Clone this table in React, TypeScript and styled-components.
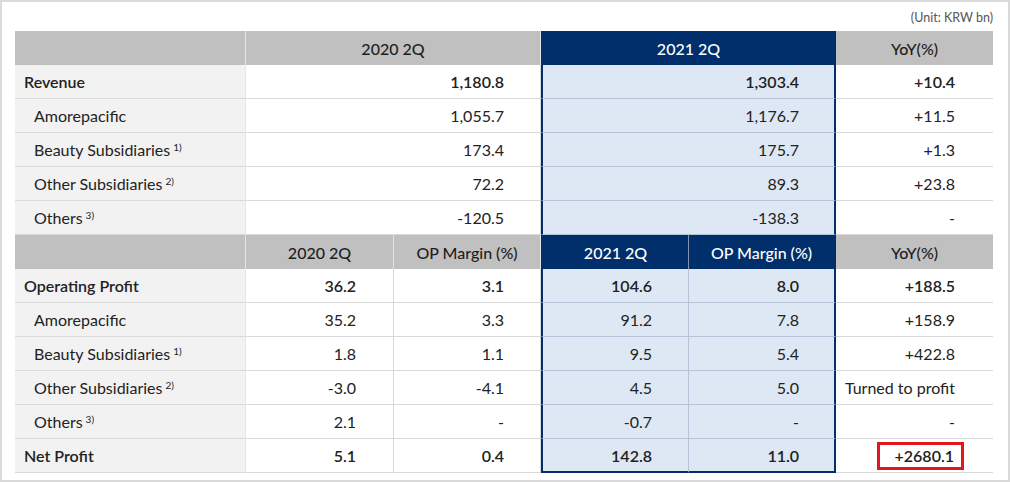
import React from "react";
import styled, { createGlobalStyle, css } from "styled-components";

const GlobalStyle = createGlobalStyle`
  body {
    margin: 0;
    background: #ffffff;
    font-family: Lato, "Open Sans", "Liberation Sans", sans-serif;
    color: #222222;
  }
`;

const NAVY = "#012f6b";
const LINE = "#d9d9d9";
const HL_LINE = "#b4c3d8";

const Frame = styled.div`
  width: 1010px;
  height: 482px;
  box-sizing: border-box;
  border: 2px solid #dadada;
  padding: 4px 15px 0 13px;
`;

const UnitNote = styled.div`
  height: 25px;
  line-height: 24px;
  text-align: right;
  font-size: 12.5px;
  color: #555555;
`;

const Table = styled.table`
  width: 978px;
  table-layout: fixed;
  border-collapse: separate;
  border-spacing: 0;
  font-size: 16px;
`;

const Row = styled.tr`
  height: 34px;
`;

const HeadCell = styled.th<{ $navy?: boolean; $edge?: "left" | "right" | "both"; $split?: boolean }>`
  padding: 0;
  font-weight: 500;
  text-align: center;
  background: #c0c0c0;
  color: #1e1e1e;
  border-right: 1px solid #e4e4e4;
  ${(p) =>
    p.$navy &&
    css`
      background: ${NAVY};
      color: #ffffff;
      border-right: 1px solid ${p.$split ? "#8193b0" : NAVY};
    `}
  ${(p) =>
    (p.$edge === "left" || p.$edge === "both") &&
    css`
      border-left: 2px solid ${NAVY};
    `}
  ${(p) =>
    (p.$edge === "right" || p.$edge === "both") &&
    css`
      border-right: 2px solid ${NAVY};
    `}
  &:last-child {
    border-right: none;
  }
`;

const LabelCell = styled.td<{ $main?: boolean }>`
  padding: 0 0 0 ${(p) => (p.$main ? "9px" : "19px")};
  background: #f2f2f2;
  border-right: 1px solid #e6e6e6;
  border-bottom: 1px solid ${LINE};
  font-weight: ${(p) => (p.$main ? 600 : 400)};
  white-space: nowrap;
`;

const ValueCell = styled.td<{
  $main?: boolean;
  $hl?: boolean;
  $edge?: "left" | "right" | "both";
  $last?: boolean;
  $pad?: number;
}>`
  padding: 0 ${(p) => p.$pad ?? 36}px 0 0;
  text-align: right;
  white-space: nowrap;
  background: #ffffff;
  border-right: 1px solid ${LINE};
  border-bottom: 1px solid ${LINE};
  font-weight: ${(p) => (p.$main ? 600 : 400)};
  ${(p) =>
    p.$hl &&
    css`
      background: #dde8f4;
      border-right: 1px solid ${HL_LINE};
      border-bottom: 1px solid ${p.$last ? NAVY : HL_LINE};
      ${p.$last &&
      css`
        border-bottom-width: 2px;
      `}
    `}
  ${(p) =>
    (p.$edge === "left" || p.$edge === "both") &&
    css`
      border-left: 2px solid ${NAVY};
    `}
  ${(p) =>
    (p.$edge === "right" || p.$edge === "both") &&
    css`
      border-right: 2px solid ${NAVY};
    `}
  &:last-child {
    border-right: none;
  }
`;

const Note = styled.sup`
  font-size: 10px;
  vertical-align: 5px;
  line-height: 0;
  margin-left: 3px;
`;

const RedBox = styled.span`
  display: inline-block;
  box-sizing: border-box;
  width: 87px;
  height: 28px;
  line-height: 22px;
  padding-right: 7px;
  border: 3px solid #e3151d;
  text-align: right;
  vertical-align: middle;
`;

type TopRow = { label: string; note?: string; main?: boolean; a: string; b: string; yoy: string };
type BottomRow = {
  label: string;
  note?: string;
  main?: boolean;
  v: [string, string, string, string];
  yoy: string;
  box?: boolean;
};

const topRows: TopRow[] = [
  { label: "Revenue", main: true, a: "1,180.8", b: "1,303.4", yoy: "+10.4" },
  { label: "Amorepacific", a: "1,055.7", b: "1,176.7", yoy: "+11.5" },
  { label: "Beauty Subsidiaries", note: "1)", a: "173.4", b: "175.7", yoy: "+1.3" },
  { label: "Other Subsidiaries", note: "2)", a: "72.2", b: "89.3", yoy: "+23.8" },
  { label: "Others", note: "3)", a: "-120.5", b: "-138.3", yoy: "-" },
];

const bottomRows: BottomRow[] = [
  { label: "Operating Profit", main: true, v: ["36.2", "3.1", "104.6", "8.0"], yoy: "+188.5" },
  { label: "Amorepacific", v: ["35.2", "3.3", "91.2", "7.8"], yoy: "+158.9" },
  { label: "Beauty Subsidiaries", note: "1)", v: ["1.8", "1.1", "9.5", "5.4"], yoy: "+422.8" },
  { label: "Other Subsidiaries", note: "2)", v: ["-3.0", "-4.1", "4.5", "5.0"], yoy: "Turned to profit" },
  { label: "Others", note: "3)", v: ["2.1", "-", "-0.7", "-"], yoy: "-" },
  { label: "Net Profit", main: true, v: ["5.1", "0.4", "142.8", "11.0"], yoy: "+2680.1", box: true },
];

function Label({ row }: { row: { label: string; note?: string; main?: boolean } }) {
  return (
    <LabelCell $main={row.main}>
      {row.label}
      {row.note && <Note>{row.note}</Note>}
    </LabelCell>
  );
}

export default function App() {
  return (
    <>
      <GlobalStyle />
      <Frame>
        <UnitNote>(Unit: KRW bn)</UnitNote>
        <Table>
          <colgroup>
            <col style={{ width: 231 }} />
            <col style={{ width: 148 }} />
            <col style={{ width: 147 }} />
            <col style={{ width: 148 }} />
            <col style={{ width: 147 }} />
            <col style={{ width: 157 }} />
          </colgroup>
          <tbody>
            <Row>
              <HeadCell />
              <HeadCell colSpan={2}>2020 2Q</HeadCell>
              <HeadCell colSpan={2} $navy $edge="both">
                2021 2Q
              </HeadCell>
              <HeadCell>YoY(%)</HeadCell>
            </Row>
            {topRows.map((r) => (
              <Row key={r.label}>
                <Label row={r} />
                <ValueCell colSpan={2} $main={r.main}>
                  {r.a}
                </ValueCell>
                <ValueCell colSpan={2} $main={r.main} $hl $edge="both" $pad={35}>
                  {r.b}
                </ValueCell>
                <ValueCell $main={r.main} $pad={38}>
                  {r.yoy}
                </ValueCell>
              </Row>
            ))}
            <Row>
              <HeadCell />
              <HeadCell>2020 2Q</HeadCell>
              <HeadCell>OP Margin (%)</HeadCell>
              <HeadCell $navy $split $edge="left">
                2021 2Q
              </HeadCell>
              <HeadCell $navy $edge="right">
                OP Margin (%)
              </HeadCell>
              <HeadCell>YoY(%)</HeadCell>
            </Row>
            {bottomRows.map((r, i) => {
              const last = i === bottomRows.length - 1;
              return (
                <Row key={r.label + i}>
                  <Label row={r} />
                  <ValueCell $main={r.main} $pad={37}>
                    {r.v[0]}
                  </ValueCell>
                  <ValueCell $main={r.main}>{r.v[1]}</ValueCell>
                  <ValueCell $main={r.main} $hl $edge="left" $last={last}>
                    {r.v[2]}
                  </ValueCell>
                  <ValueCell $main={r.main} $hl $edge="right" $last={last} $pad={35}>
                    {r.v[3]}
                  </ValueCell>
                  <ValueCell $main={r.main} $pad={r.box ? 29 : 38}>
                    {r.box ? <RedBox>{r.yoy}</RedBox> : r.yoy}
                  </ValueCell>
                </Row>
              );
            })}
          </tbody>
        </Table>
      </Frame>
    </>
  );
}
